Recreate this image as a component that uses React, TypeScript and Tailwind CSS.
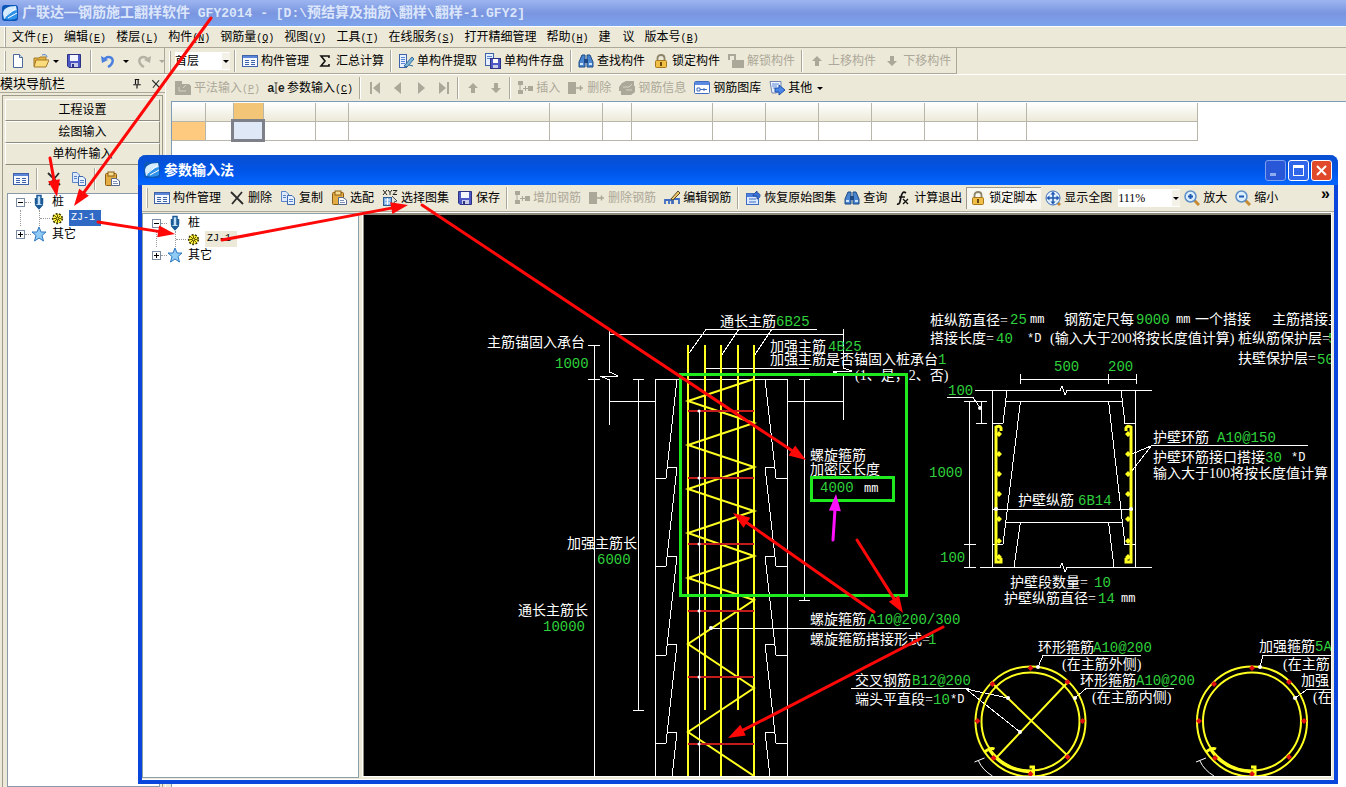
import React, { FC, ReactNode } from "react";

const icons: Record<string, ReactNode> = {
  logo: (
    <>
      <rect x="0" y="0" width="16" height="16" rx="3" fill="#0b57b8" />
      <path d="M1 9C1 4 5 1 14 1L15 6C10 6 6 8 5 13L2 14Z" fill="#d6ecff" />
      <path d="M3 14C4 9 9 6 15 5V13C12 15 7 15 3 14Z" fill="#2f93ea" />
      <path d="M4 11L13 4M6 13L15 8" stroke="#fff" strokeWidth="1" />
    </>
  ),
  file: (
    <>
      <path d="M3.500 1.500H9.500L12.500 4.500V14.500H3.500Z" fill="#fff" stroke="#4a6a9c" />
      <path d="M9.500 1.500V4.500H12.500" fill="#cfe0f5" stroke="#4a6a9c" />
    </>
  ),
  open: (
    <>
      <path d="M1 5H6L7 4H13V13H1Z" fill="#e8b53c" stroke="#a3782a" />
      <path d="M3 7H16L13 14H1Z" fill="#fbdc7c" stroke="#a3782a" />
      <path d="M9 2C12 1 14 2 14 4" fill="none" stroke="#4b7fc8" />
    </>
  ),
  save: (
    <>
      <path d="M1.500 1.500H14.500V14.500H3L1.500 13Z" fill="#4d58c4" stroke="#2b3382" />
      <rect x="4" y="2" width="8" height="6" fill="#f4f6ff" />
      <rect x="5" y="10" width="7" height="4" fill="#c9cce8" />
      <rect x="6" y="11" width="2" height="3" fill="#2b3382" />
    </>
  ),
  undo: (
    <>
      <path d="M4 7C7 2 14 4 12.500 9C12 11 10 13 8 14" fill="none" stroke="#4a7fe0" strokeWidth="2.500" />
      <path d="M1 3L2 10L8 7Z" fill="#4a7fe0" />
    </>
  ),
  redo: (
    <>
      <path d="M12 7C9 2 2 4 3.500 9C4 11 6 13 8 14" fill="none" stroke="#b5b2a4" strokeWidth="2.500" />
      <path d="M15 3L14 10L8 7Z" fill="#b5b2a4" />
    </>
  ),
  form: (
    <>
      <rect x="0.500" y="2.500" width="15" height="11" fill="#f5f9ff" stroke="#3f62a8" />
      <rect x="1" y="3" width="14" height="2" fill="#5b86d8" />
      <path d="M3 7.500H7M3 9.500H7M3 11.500H7M9 7.500H13M9 9.500H13M9 11.500H13" stroke="#3f62a8" />
    </>
  ),
  sigma: <path d="M12 5V3H4L8 8L4 13H12V11" fill="none" stroke="#111" strokeWidth="1.600" />,
  extract: (
    <>
      <rect x="1.500" y="1.500" width="7" height="13" fill="#e7f0ff" stroke="#3f62a8" />
      <path d="M3 4.500H7M3 6.500H7M3 8.500H7M3 10.500H7" stroke="#5b86d8" />
      <path d="M6 13L14 4L16 6L9 14ZM11 12L15 13" fill="#7fb5d8" stroke="#2d6a9a" />
    </>
  ),
  store: (
    <>
      <rect x="0.500" y="0.500" width="8" height="12" fill="#e7f0ff" stroke="#3f62a8" />
      <path d="M2 3.500H7M2 5.500H7" stroke="#5b86d8" />
      <rect x="5.500" y="5.500" width="10" height="10" fill="#4d58c4" stroke="#2b3382" />
      <rect x="8" y="6" width="5" height="4" fill="#fff" />
      <rect x="8" y="12" width="5" height="3" fill="#c9cce8" />
    </>
  ),
  find: (
    <>
      <path d="M4 2H7V6L7 14H1V9ZM9 2H12L15 9V14H9Z" fill="#4a86d0" stroke="#1d4a86" />
      <rect x="6" y="6" width="4" height="4" fill="#1d4a86" />
      <path d="M2 11H5M11 11H14" stroke="#cfe4ff" strokeWidth="2" />
    </>
  ),
  lock: (
    <>
      <path d="M4.500 8V5C4.500 1 11.500 1 11.500 5V8" fill="none" stroke="#8c8468" strokeWidth="1.800" />
      <rect x="2.500" y="7.500" width="11" height="7" rx="1" fill="#f0bf45" stroke="#a8761c" />
      <rect x="7" y="9" width="2" height="4" fill="#6a4a10" />
    </>
  ),
  unlock: (
    <>
      <path d="M1 7V2H7V7" fill="none" stroke="#aca899" strokeWidth="2" />
      <rect x="4" y="7" width="12" height="8" fill="#aca899" />
    </>
  ),
  up: <path d="M8 3L13 8H10V13H6V8H3Z" fill="#aca899" />,
  down: <path d="M8 13L13 8H10V3H6V8H3Z" fill="#aca899" />,
  first: <path d="M3 2H5V14H3ZM13 2V14L6 8Z" fill="#aca899" />,
  prev: <path d="M11 2V14L4 8Z" fill="#aca899" />,
  next: <path d="M5 2V14L12 8Z" fill="#aca899" />,
  last: <path d="M13 2H11V14H13ZM3 2V14L10 8Z" fill="#aca899" />,
  flat: (
    <>
      <path d="M0 1H7V4H14L16 6V15H0Z" fill="#aca899" />
      <path d="M4 7V11H11M8 8L11 5" stroke="#d5d2c4" />
    </>
  ),
  insert: (
    <>
      <path d="M1 1H6V5H1ZM1 10H6V14H1ZM11 6H16V11H11Z" fill="#aca899" />
      <path d="M3 5V10M6 8.500H11M8.500 6V11" stroke="#aca899" />
    </>
  ),
  remove: (
    <>
      <rect x="0" y="2" width="8" height="12" fill="#aca899" />
      <path d="M8 8H15M12.500 5.500V10.500" stroke="#aca899" strokeWidth="1.500" />
    </>
  ),
  info: (
    <>
      <path d="M3 3L7 1H15V6H16V12L12 15H2V11H0V7Z" fill="#aca899" />
      <path d="M4 7H10L13 4M7 10H13" stroke="#d5d2c4" />
    </>
  ),
  gallery: (
    <>
      <rect x="0.500" y="1.500" width="15" height="12" rx="1" fill="#fff" stroke="#3f6cc0" />
      <rect x="1" y="2" width="14" height="3" fill="#5b8be0" />
      <path d="M3 8H6V11H3ZM6 9.500H13M10 8V11" fill="none" stroke="#3f6cc0" />
    </>
  ),
  other: (
    <>
      <path d="M1 1.500H12V10L7 13H3Z" fill="#eef4ff" stroke="#6e83b0" />
      <path d="M3 4H10M3 6H8M4 8H6" stroke="#5b86d8" />
      <path d="M6 8H10V5L16 10L10 15V12H6Z" fill="#4a86e8" stroke="#1f4fa8" />
    </>
  ),
  cross: <path d="M2 2L14 14M13 2L3 14" stroke="#2b2b2b" strokeWidth="1.800" />,
  copy: (
    <>
      <path d="M1.500 1.500H6L8.500 4V11.500H1.500Z" fill="#dce9ff" stroke="#5a83c8" />
      <path d="M7.500 5.500H12L14.500 8V14.500H7.500Z" fill="#e8f1ff" stroke="#3d67b0" />
      <path d="M9 9.500H13M9 11.500H13M3 5.500H6M3 7.500H6" stroke="#5a83c8" />
    </>
  ),
  paste: (
    <>
      <rect x="1.500" y="2.500" width="11" height="12" rx="1" fill="#e3ad44" stroke="#8c5d14" />
      <rect x="4" y="1" width="6" height="4" fill="#f6dd90" stroke="#8c5d14" />
      <path d="M7.500 7.500H12L15.500 10V14.500H7.500Z" fill="#fff" stroke="#56688c" />
      <path d="M9 10.500H13M9 12.500H14" stroke="#7d90b8" />
    </>
  ),
  xyz: (
    <>
      <path d="M1 0L5 5M5 0L1 5M6 0L8 2.500L10 0M8 2.500V5M11 0.500H15L11 4.500H15" fill="none" stroke="#222" />
      <rect x="1.500" y="7.500" width="8" height="8" fill="#7fb2e8" stroke="#2f5f9a" />
      <path d="M3 10H8M3 13H8M5.500 8V15" stroke="#fff" />
      <path d="M10 6L15 11L12 12L14 16" fill="#ddd" stroke="#555" />
    </>
  ),
  editbar: (
    <>
      <path d="M1 14V10H5V14M5 11L8 9V14M9 14V9H15V14" fill="none" stroke="#3f6cc0" strokeWidth="1.800" />
      <path d="M7 9L14 1L16 3L9 10Z" fill="#e9c46a" stroke="#5c4a20" />
    </>
  ),
  restore: (
    <>
      <rect x="1.500" y="3.500" width="12" height="11" fill="#dceaff" stroke="#3f6cc0" />
      <rect x="2" y="4" width="11" height="3" fill="#4a7fe0" />
      <path d="M4 9H11M4 12H11" stroke="#3f6cc0" />
      <path d="M8 5L12 1V3C16 3 16 8 12 9V6H8Z" fill="#3b74dc" stroke="#2450a0" />
    </>
  ),
  fx: (
    <>
      <path d="M2 14C5 15 5 11 6 7C7 3 8 1 11 3M4 7H10" fill="none" stroke="#111" strokeWidth="1.700" />
      <path d="M8 9L13 14M13 9L8 14" stroke="#111" strokeWidth="1.300" />
    </>
  ),
  fit: (
    <>
      <path d="M11 11L15 15" stroke="#c58a32" strokeWidth="3" />
      <circle cx="8" cy="8" r="7" fill="#e4f1ff" stroke="#3a6cb8" />
      <path d="M8 3V13M3 8H13" stroke="#1f58b0" strokeWidth="1.500" />
      <path d="M8 1.500L10.500 4.500H5.500ZM8 14.500L10.500 11.500H5.500ZM1.500 8L4.500 5.500V10.500ZM14.500 8L11.500 5.500V10.500Z" fill="#1f58b0" />
    </>
  ),
  zoomin: (
    <>
      <path d="M10 10L15 15" stroke="#c58a32" strokeWidth="3" />
      <circle cx="6.500" cy="6.500" r="5.500" fill="#dcefff" stroke="#5d8fc8" strokeWidth="1.500" />
      <path d="M6.500 4V9M4 6.500H9" stroke="#1f58b0" strokeWidth="2" />
    </>
  ),
  zoomout: (
    <>
      <path d="M10 10L15 15" stroke="#c58a32" strokeWidth="3" />
      <circle cx="6.500" cy="6.500" r="5.500" fill="#dcefff" stroke="#5d8fc8" strokeWidth="1.500" />
      <path d="M4 6.500H9" stroke="#1f58b0" strokeWidth="2" />
    </>
  ),
  pile: (
    <>
      <path d="M6 1.500H10V11H13L8 15L3 11H6Z" fill="#bfe0f8" stroke="none" />
      <path d="M6 10V1.500H10V10M4.500 4V9C4.500 12 6 12 8 14.500C10 12 11.500 12 11.500 9V4" fill="none" stroke="#1c5a96" strokeWidth="1.500" />
      <path d="M4 11H12L8 15Z" fill="#1c5a96" />
    </>
  ),
  star: <path d="M8 1L10 6H15L11 9.500L12.500 15L8 12L3.500 15L5 9.500L1 6H6Z" fill="#8fcbf5" stroke="#2d78c0" />,
  gear: (
    <>
      <circle cx="8" cy="8" r="5" fill="#fff13a" stroke="#3d3800" strokeWidth="2" strokeDasharray="2 1.500" />
      <circle cx="8" cy="8" r="4" fill="#fff13a" />
      <path d="M8 4V12M4 8H12M5 5L11 11M11 5L5 11" stroke="#5d5500" />
      <circle cx="8" cy="8" r="1.500" fill="#fff13a" stroke="#3d3800" />
    </>
  ),
  pin: <path d="M5 2H11M6 2V8M9.500 2V8M3 9H13M8 9V14" fill="none" stroke="#111" strokeWidth="1.500" />,
  caret: (
    <>
      <path d="M6 1H7.500L8 2L8.500 1H10M8 2V14M6 15H7.500L8 14L8.500 15H10" fill="none" stroke="#111" />
    </>
  ),
};

const Icon: FC<{ name: string; className?: string }> = ({ name, className = "w-4 h-4" }) => (
  <svg className={`shrink-0 ${className}`} viewBox="0 0 16 16" fill="none" aria-hidden="true">
    {icons[name]}
  </svg>
);

const Key: FC<{ k: string }> = ({ k }) => (
  <span className="font-['Liberation_Mono',monospace] text-[10px]">
    (<u>{k}</u>)
  </span>
);

const ToolButton: FC<{ icon: string; label?: string; k?: string; disabled?: boolean; pressed?: boolean }> = ({
  icon,
  label,
  k,
  disabled,
  pressed,
}) => (
  <button
    type="button"
    disabled={disabled}
    aria-label={label || icon}
    className={`flex h-[22px] shrink-0 items-center gap-[3px] px-1 whitespace-nowrap ${
      disabled ? "text-[#aca899]" : "text-black"
    } ${pressed ? "bg-[#f7f6ef] shadow-[inset_1px_1px_0_#9d9a8b]" : ""}`}
  >
    {icon === "ale" ? (
      <span className="flex w-4 items-center justify-center text-xs font-bold text-[#222]">
        a
        <Icon name="caret" className="-mx-1 h-3 w-3" />e
      </span>
    ) : (
      <Icon name={icon} />
    )}
    {label && <span>{label}{k && <Key k={k} />}</span>}
  </button>
);

const IconButton: FC<{ icon: string; wide?: boolean; disabled?: boolean }> = ({ icon, wide, disabled }) => (
  <button
    type="button"
    disabled={disabled}
    aria-label={icon}
    className={`flex h-[22px] shrink-0 items-center justify-center ${wide ? "w-7" : "w-[23px]"}`}
  >
    <Icon name={icon} />
  </button>
);

const Sep: FC = () => <span className="mx-0.5 h-[22px] w-0.5 shrink-0 border-l border-[#aca899] bg-white" />;
const Grip: FC = () => <span className="h-5 w-0.5 shrink-0 border-r border-[#aca899] bg-white" />;
const Caret: FC<{ dim?: boolean }> = ({ dim }) => (
  <svg className="h-2 w-2 shrink-0" viewBox="0 0 8 8">
    <path d="M1 3H7L4 6Z" fill={dim ? "#aca899" : "#000"} />
  </svg>
);

const Dropdown: FC<{ value: string; label: string; className: string }> = ({ value, label, className }) => (
  <div className={`flex h-[18px] shrink-0 items-center bg-white ${className}`}>
    <select aria-label={label} className="h-full min-w-0 flex-1 appearance-none bg-white text-xs leading-none outline-none">
      <option>{value}</option>
    </select>
    <span className="flex h-4 items-center bg-[#f4f2e8]">
      <Caret />
    </span>
  </div>
);

const Expander: FC<{ open?: boolean }> = ({ open }) => (
  <svg className="h-[9px] w-[9px] shrink-0" viewBox="0 0 9 9">
    <rect x="0.500" y="0.500" width="8" height="8" fill="#fff" stroke="#7b8ba0" />
    <path d={open ? "M2 4.500H7" : "M2 4.500H7M4.500 2V7"} stroke="#000" />
  </svg>
);

const Dots: FC = () => <span className="w-1.5 shrink-0 border-t border-dotted border-[#999]" />;

const ComponentTree: FC<{ focused?: boolean }> = ({ focused }) => (
  <ul className="pl-2 text-xs leading-4">
    <li>
      <div className="flex h-4 items-center">
        <Expander open />
        <Dots />
        <Icon name="pile" />
        <span className="pl-[5px]">桩</span>
      </div>
      <ul className="ml-1 border-l border-dotted border-[#999] pl-[18px]">
        <li className="flex h-4 items-center border-l border-dotted border-[#999]">
          <span className="w-2.5 border-t border-dotted border-[#999]" />
          <Icon name="gear" className="h-[15px] w-[15px]" />
          <span
            className={`ml-1 px-0.5 pr-1.5 font-['Liberation_Mono',monospace] text-[10px] ${
              focused ? "bg-[#316ac5] text-white" : "bg-[#ece9d8]"
            }`}
          >
            ZJ-1
          </span>
        </li>
      </ul>
    </li>
    <li className="flex h-4 items-center">
      <Expander />
      <Dots />
      <Icon name="star" />
      <span className="pl-[5px]">其它</span>
    </li>
  </ul>
);

const menus: [string, string?][] = [
  ["文件", "F"], ["编辑", "E"], ["楼层", "L"], ["构件", "N"], ["钢筋量", "Q"], ["视图", "V"], ["工具", "T"],
  ["在线服务", "S"], ["打开精细管理"], ["帮助", "H"], ["建\u3000议"], ["版本号", "B"],
];

const columnWidths = [33, 28, 30, 52, 33, 201, 53, 29, 81, 53, 53, 53, 53, 53, 49, 171];

const SideNav: FC = () => (
  <aside className="flex w-[166px] shrink-0 flex-col border-r border-white">
    <header className="flex h-[18px] items-center justify-between border-b border-[#aca899] pr-1">
      <h2 className="text-[13px] leading-4">模块导航栏</h2>
      <span className="flex items-center gap-2">
        <Icon name="pin" className="h-3 w-3" />
        <Icon name="cross" className="h-2.5 w-2.5" />
      </span>
    </header>
    <div className="mx-0.5 mt-0.5 flex flex-1 flex-col border-x border-t border-[#9d9a8b] px-0.5 pt-[3px]">
      {["工程设置", "绘图输入", "单构件输入"].map((name) => (
        <button
          key={name}
          type="button"
          className="h-[22px] shrink-0 border border-t-white border-r-[#8f8c7d] border-b-[#8f8c7d] border-l-white text-xs"
        >
          {name}
        </button>
      ))}
      <div className="flex h-7 items-center gap-0.5 pl-1">
        <IconButton icon="form" />
        <Sep />
        <IconButton icon="cross" />
        <IconButton icon="copy" />
        <Sep />
        <IconButton icon="paste" />
      </div>
      <div className="ml-0.5 flex-1 border border-[#8a9aa8] bg-white">
        <ComponentTree focused />
      </div>
    </div>
  </aside>
);

const RebarTable: FC = () => (
  <table className="mt-px w-[1026px] table-fixed border-collapse">
    <colgroup>
      {columnWidths.map((w, i) => (
        <col key={i} style={{ width: w }} />
      ))}
    </colgroup>
    <thead>
      <tr className="h-[18px]">
        {columnWidths.map((_, i) => (
          <th
            key={i}
            className={`border-r border-b border-[#b8b6ab] ${
              i === 2 ? "bg-[#f3c577]" : "bg-linear-to-b from-white to-[#ece9d8]"
            }`}
          />
        ))}
      </tr>
    </thead>
    <tbody>
      <tr className="h-[19px]">
        {columnWidths.map((_, i) => (
          <td
            key={i}
            className={`border-r border-b border-[#b8b6ab] ${
              i === 0 ? "bg-[#fdca80]" : i === 2 ? "bg-[#dfe8f7] outline-3 -outline-offset-1 outline-[#7d8088]" : "bg-white"
            }`}
          />
        ))}
      </tr>
    </tbody>
  </table>
);

// Labels on the drawing: x, vertical centre, text
const whiteLabels: [number, number, string][] = [
  [487, 342, "主筋锚固入承台"], [720, 321, "通长主筋"], [770, 346, "加强主筋"], [770, 359, "加强主筋是否锚固入桩承台"],
  [855, 375, "(1、是，2、否)"], [810, 455, "螺旋箍筋"], [810, 469, "加密区长度"], [567, 543, "加强主筋长"],
  [518, 610, "通长主筋长"], [810, 619, "螺旋箍筋"], [810, 639, "螺旋箍筋搭接形式="], [855, 680, "交叉钢筋"],
  [855, 699, "端头平直段="], [930, 320, "桩纵筋直径="], [1064, 319, "钢筋定尺每"], [1195, 319, "一个搭接"],
  [1272, 319, "主筋搭接主"], [930, 338, "搭接长度="], [1050, 338, "(输入大于200将按长度值计算)"],
  [1238, 338, "桩纵筋保护层="], [1238, 358, "扶壁保护层="], [1018, 500, "护壁纵筋"], [1153, 437, "护壁环筋"],
  [1153, 457, "护壁环筋接口搭接"], [1153, 473, "输入大于100将按长度值计算"], [1010, 582, "护壁段数量="],
  [1004, 598, "护壁纵筋直径="], [1038, 647, "环形箍筋"], [1062, 664, "(在主筋外侧)"], [1080, 680, "环形箍筋"],
  [1092, 697, "(在主筋内侧)"], [1259, 646, "加强箍筋"], [1283, 664, "(在主筋"], [1301, 680, "加强"],
  [1313, 697, "(在"],
];

const unitLabels: [number, number, string][] = [
  [864, 488, "mm"], [950, 699, "*D"], [1030, 319, "mm"], [1176, 319, "mm"], [1027, 338, "*D"], [1291, 457, "*D"],
  [1121, 598, "mm"],
];

const valueLabels: [number, number, string][] = [
  [776, 321, "6B25"], [828, 346, "4B25"], [938, 359, "1"], [555, 363, "1000"], [820, 487, "4000"], [597, 559, "6000"],
  [543, 626, "10000"], [868, 619, "A10@200/300"], [928, 639, "1"], [912, 680, "B12@200"], [933, 699, "10"],
  [1010, 319, "25"], [1136, 319, "9000"], [996, 338, "40"], [1328, 338, "5"], [1317, 359, "50"], [1054, 366, "500"],
  [1108, 366, "200"], [948, 390, "100"], [929, 472, "1000"], [940, 557, "100"], [1078, 500, "6B14"],
  [1217, 437, "A10@150"], [1265, 457, "30"], [1094, 582, "10"], [1098, 598, "14"], [1093, 647, "A10@200"],
  [1136, 680, "A10@200"], [1315, 646, "5A"],
];

const wallSteps = [379, 467, 556, 644, 732];
const hoopRows = [411, 478, 544, 611, 677, 744];
const barDots = [434, 454, 474, 494, 519, 541, 557];

const wallPath = (side: 1 | -1) => {
  const px = (x: number) => (side === 1 ? x : 1442 - x);
  return wallSteps
    .map((y, i) => {
      const ledge = i > 0 ? `M${px(667)} ${y}H${px(677)}` : "";
      return `${ledge}M${px(677)} ${y}L${px(666)} ${y + 99}H${px(655)}`;
    })
    .join("");
};

const Ring: FC<{ cx: number }> = ({ cx }) => (
  <g>
    <g fill="none" stroke="#ffff20" strokeWidth="2">
      <circle cx={cx} cy="721.500" r="55" />
      <circle cx={cx} cy="721.500" r="49" />
      <path d={`M${cx - 46} 752Q${cx - 40} 747 ${cx - 36} 749M${cx - 41} 750Q${cx - 28} 770 ${cx} 772L${cx + 3} 775V767H${cx - 1}`} strokeWidth="3" />
    </g>
    {[[0, 668], [-38, 684], [37, 682], [-53, 721], [52, 721], [-37, 758], [37, 757], [0, 774]].map(([dx, y]) => (
      <path key={`${dx}:${y}`} d={`M${cx + dx} ${y - 3}l3 3l-3 3l-3 -3Z`} fill="#e01010" />
    ))}
    <path d={`M${cx - 56} 762L${cx - 46} 758M${cx - 52} 761Q${cx - 48} 770 ${cx - 38} 776`} stroke="#fff" fill="none" />
  </g>
);

const PileDrawing: FC = () => (
  <svg className="block h-full w-full bg-black" role="img" aria-label="桩参数图">
    <g transform="translate(-364 -215)">
      <g fill="none" stroke="#fff" strokeWidth="1" shapeRendering="crispEdges">
        <path d="M594.500 345V776M588 345.500H600M588 379.500H600" />
        <path d="M638.500 379V710M633 379.500H644M633 710.500H644" />
        <path d="M804.500 379V600M799 379.500H810M799 600.500H810" />
        <path d="M609.500 329V372L618 376H600L609.500 380V425M609 334.500H843M843.500 329V368L852 371L833 372L843.500 375V420" />
        <path d="M609 401.500H655M787 401.500H843M655.500 776V379.500H787.500V776" />
        <path d={wallPath(1)} />
        <path d={wallPath(-1)} />
        <path d="M817 329.500H706L687 356M739 329L721 356M772 329L754 356M704 368.500H809M699.500 411V776M711 628.500H911" />
        <path d="M851 688.500H969M966 689L1008 698M966 689L1020 732" />
        <path d="M1020 379.500H1136M1020.500 374V384M1108.500 374V384M1136.500 374V384" />
        <path d="M975 390.500H1060L1062 386L1065 395L1067 390.500H1152M980 567.500H1060L1062 563L1065 572L1067 567.500H1152" />
        <path d="M947 397.500H973L981 409M981.500 401V423M976 423.500H987M964 401.500H987M969.500 401V567M964 544.500H976M964 567.500H976" />
        <path d="M992.500 390V567M1007 390L1003 423.500H992M1020.500 401L1003 544.500H992M1006 401.500H1122M1006 522.500H1122M1020.500 522L1014 567" />
        <path d="M1135.500 390V567M1121 390L1125 423.500H1136M1108.500 401L1125 544.500H1136M1108.500 522L1114 567" />
        <path d="M992 509.500H1133M1308 445.500H1152L1132 454M1152 445L1131 472" />
        <path d="M1141 655.500H1043L1038 667M1174 688.500H1086L1075 698M1360 655.500H1263L1260 667M1360 689.500H1307L1295 698" />
      </g>
      <g fill="none" stroke="#ffff20" strokeWidth="2">
        <path d="M688 345V776M721 345V776M754 345V776M705 345V710M738 345V710" />
        <path d="M754 379L688 401L754 423L688 445L754 467L688 489L754 511L688 533L754 556L688 578L754 600L688 644L754 688L688 732L754 776" />
        <path d="M1001 431V428Q1000 425 996 427V562H1001V558M1126 431V428Q1127 425 1131 427V562H1126V558" strokeWidth="3" />
      </g>
      {hoopRows.map((y) => (
        <g key={y}>
          <path d={`M688 ${y}H754`} stroke="#c41c1c" strokeWidth="2" />
          <circle cx="699" cy={y} r="1.500" fill="#fff" />
        </g>
      ))}
      {barDots.map((y) => (
        <path key={y} d={`M999 ${y - 3}l3 3l-3 3l-3 -3ZM1128 ${y - 3}l3 3l-3 3l-3 -3Z`} fill="#ffff20" />
      ))}
      <path d="M991 682L1069 757M1067 683L997 757" stroke="#ffff20" strokeWidth="2" />
      <Ring cx={1030.5} />
      <Ring cx={1252} />
      <g fill="#fff">
        {[[1008, 698], [1020, 732], [1038, 667], [1075, 698], [1260, 667], [1295, 698], [996, 509], [1131, 509], [980, 408], [711, 628]].map(
          ([x, y]) => (
            <circle key={`${x}:${y}`} cx={x} cy={y} r="2" />
          )
        )}
      </g>
      <g className="font-['Liberation_Serif','Noto_Sans_CJK_SC',serif] text-[14px]" fill="#fff">
        {whiteLabels.map(([x, y, text]) => (
          <text key={`${x}:${y}`} x={x} y={y + 5}>{text}</text>
        ))}
      </g>
      <g className="font-['Liberation_Mono',monospace] text-[12px]" fill="#fff">
        {unitLabels.map(([x, y, text]) => (
          <text key={`${x}:${y}`} x={x} y={y + 4}>{text}</text>
        ))}
      </g>
      <g className="font-['Liberation_Mono',monospace] text-[14px]" fill="#2fd03c">
        {valueLabels.map(([x, y, text]) => (
          <text key={`${x}:${y}`} x={x} y={y + 5}>{text}</text>
        ))}
      </g>
    </g>
  </svg>
);

const ParamDialog: FC = () => (
  <section
    aria-label="参数输入法"
    className="absolute top-[155px] right-2 bottom-[3px] left-[138px] flex flex-col rounded-t-lg border-x-4 border-b-4 border-[#0a45dc] bg-[#ece9d8] shadow-[inset_0_-1px_0_#fff]"
  >
    <header className="-mx-1 flex h-[30px] shrink-0 items-center gap-1 rounded-t-lg bg-linear-to-b from-[#0a4fd0] via-[#0054e6] to-[#0566ff] pr-1.5 pl-1.5">
      <Icon name="logo" />
      <h1 className="flex-1 text-sm leading-5 font-bold text-white">参数输入法</h1>
      <div className="flex gap-0.5">
        <button type="button" aria-label="最小化" className="flex h-[21px] w-[21px] items-end rounded-[3px] border border-[#7d9ff0] bg-[#2857d8] p-1">
          <span className="h-[3px] w-1.5 bg-[#8fabf2]" />
        </button>
        <button type="button" aria-label="最大化" className="h-[21px] w-[21px] rounded-[3px] border border-white bg-[#2f66ea] p-1">
          <span className="block h-full border border-t-[3px] border-white" />
        </button>
        <button type="button" aria-label="关闭" className="h-[21px] w-[21px] rounded-[3px] border border-white bg-[#e0492a] p-1">
          <svg viewBox="0 0 11 11" className="h-full w-full">
            <path d="M1 1L10 10M10 1L1 10" stroke="#fff" strokeWidth="2" />
          </svg>
        </button>
      </div>
    </header>
    <div className="flex h-[27px] shrink-0 items-center overflow-hidden border-b border-[#aca899] pl-1 text-xs">
      <Grip />
      <span className="w-0.5 shrink-0" />
      <ToolButton icon="form" label="构件管理" />
      <ToolButton icon="cross" label="删除" />
      <ToolButton icon="copy" label="复制" />
      <ToolButton icon="paste" label="选配" />
      <ToolButton icon="xyz" label="选择图集" />
      <ToolButton icon="save" label="保存" />
      <Sep />
      <ToolButton icon="insert" label="增加钢筋" disabled />
      <ToolButton icon="remove" label="删除钢筋" disabled />
      <ToolButton icon="editbar" label="编辑钢筋" />
      <Sep />
      <ToolButton icon="restore" label="恢复原始图集" />
      <ToolButton icon="find" label="查询" />
      <ToolButton icon="fx" label="计算退出" />
      <ToolButton icon="lock" label="锁定脚本" pressed />
      <ToolButton icon="fit" label="显示全图" />
      <Dropdown value="111%" label="缩放比例" className="ml-0.5 w-[62px] font-['Liberation_Serif',serif]" />
      <ToolButton icon="zoomin" label="放大" />
      <ToolButton icon="zoomout" label="缩小" />
      <button type="button" aria-label="更多" className="mr-1 mb-2 ml-auto text-base leading-none font-bold">»</button>
    </div>
    <div className="mt-px flex min-h-0 flex-1 gap-1 pb-0.5">
      <div className="w-[217px] shrink-0 border border-[#8ba0a8] bg-white pt-px pl-px">
        <ComponentTree />
      </div>
      <div className="mb-0.5 mr-[3px] min-w-0 flex-1 border-t-2 border-l border-[#8f8c7d] outline outline-white">
        <PileDrawing />
      </div>
    </div>
  </section>
);

// start x/y, end x/y
const redArrows = [
  [211, 18, 74, 206], [50, 158, 57, 197], [98, 222, 175, 234], [222, 240, 408, 205], [422, 205, 806, 460],
  [874, 612, 733, 513], [857, 540, 903, 613], [943, 627, 728, 738],
];

const Arrow: FC<{ points: number[]; color: string }> = ({ points: [x1, y1, x2, y2], color }) => {
  const len = Math.hypot(x2 - x1, y2 - y1);
  const ux = (x2 - x1) / len;
  const uy = (y2 - y1) / len;
  const bx = x2 - ux * 17;
  const by = y2 - uy * 17;
  return (
    <g fill={color} stroke={color}>
      <path d={`M${x1} ${y1}L${bx} ${by}`} strokeWidth="3" strokeLinecap="round" />
      <path d={`M${x2} ${y2}L${bx - uy * 6} ${by + ux * 6}L${bx + uy * 6} ${by - ux * 6}Z`} stroke="none" />
    </g>
  );
};

const Annotations: FC = () => (
  <svg className="pointer-events-none absolute inset-0 h-full w-full" aria-hidden="true">
    <g fill="none" stroke="#1fea1f" strokeWidth="3">
      <rect x="680.500" y="374.500" width="226" height="221" />
      <rect x="811.500" y="477.500" width="82" height="23" />
    </g>
    {redArrows.map((p) => (
      <Arrow key={p.join()} points={p} color="#ff0808" />
    ))}
    <Arrow points={[833, 540, 836, 494]} color="#ff10ff" />
  </svg>
);

const TitleLatin: FC<{ children: string }> = ({ children }) => (
  <span className="font-['Liberation_Mono',monospace] text-[13px]">{children}</span>
);

export default function App() {
  return (
    <div className="relative flex h-screen flex-col overflow-hidden bg-[#ece9d8] font-['Liberation_Sans','Noto_Sans_CJK_SC',sans-serif] text-black">
      <header className="flex h-[26px] shrink-0 items-center gap-1 bg-linear-to-b from-[#9db6f0] via-[#7b95e0] to-[#7ca4ec] pl-0.5 text-[#dbe6fb]">
        <Icon name="logo" />
        <h1 className="text-sm leading-5 font-bold whitespace-pre">
          广联达—钢筋施工翻样软件
          <TitleLatin>{" GFY2014 - [D:\\"}</TitleLatin>
          预结算及抽筋
          <TitleLatin>{"\\"}</TitleLatin>
          翻样
          <TitleLatin>{"\\"}</TitleLatin>
          翻样
          <TitleLatin>-1.GFY2]</TitleLatin>
        </h1>
      </header>
      <nav className="flex h-[22px] shrink-0 items-center gap-[10px] border-t border-b border-t-white border-b-[#aca899] pl-1 text-xs whitespace-nowrap">
        <Grip />
        {menus.map(([name, k], i) => (
          <button key={name} type="button" className={i === 0 ? "-ml-1" : ""}>
            {name}
            {k && <Key k={k} />}
          </button>
        ))}
      </nav>
      <div className="flex h-[26px] shrink-0 text-xs">
        <div className="flex w-[165px] items-center border-r border-b border-[#aca899] pl-1">
          <Grip />
          <IconButton icon="file" />
          <IconButton icon="open" />
          <Caret />
          <IconButton icon="save" wide />
          <Sep />
          <IconButton icon="undo" wide />
          <Caret />
          <IconButton icon="redo" wide disabled />
          <Caret dim />
        </div>
        <div className="flex items-center border-r border-b border-[#aca899] pr-px pl-1">
          <Grip />
          <Dropdown value="首层" label="楼层" className="mr-0.5 ml-1 w-[55px]" />
          <Sep />
          <ToolButton icon="form" label="构件管理" />
          <ToolButton icon="sigma" label="汇总计算" />
          <Sep />
          <ToolButton icon="extract" label="单构件提取" />
          <ToolButton icon="store" label="单构件存盘" />
          <Sep />
          <ToolButton icon="find" label="查找构件" />
          <ToolButton icon="lock" label="锁定构件" />
          <ToolButton icon="unlock" label="解锁构件" disabled />
          <Sep />
          <ToolButton icon="up" label="上移构件" disabled />
          <ToolButton icon="down" label="下移构件" disabled />
        </div>
      </div>
      <div className="flex min-h-0 flex-1 border-t border-white">
        <SideNav />
        <main className="flex min-w-0 flex-1 flex-col pl-[5px]">
          <div className="flex h-[26px] shrink-0 items-center text-xs">
            <ToolButton icon="flat" label="平法输入" k="P" disabled />
            <ToolButton icon="ale" label="参数输入" k="C" />
            <Sep />
            <IconButton icon="first" disabled />
            <IconButton icon="prev" disabled />
            <IconButton icon="next" disabled />
            <IconButton icon="last" disabled />
            <Sep />
            <IconButton icon="up" disabled />
            <IconButton icon="down" disabled />
            <Sep />
            <ToolButton icon="insert" label="插入" disabled />
            <ToolButton icon="remove" label="删除" disabled />
            <ToolButton icon="info" label="钢筋信息" disabled />
            <ToolButton icon="gallery" label="钢筋图库" />
            <ToolButton icon="other" label="其他" />
            <Caret />
          </div>
          <div className="flex-1 border-t border-l border-[#7f9db9] bg-white">
            <RebarTable />
          </div>
        </main>
      </div>
      <ParamDialog />
      <Annotations />
    </div>
  );
}
